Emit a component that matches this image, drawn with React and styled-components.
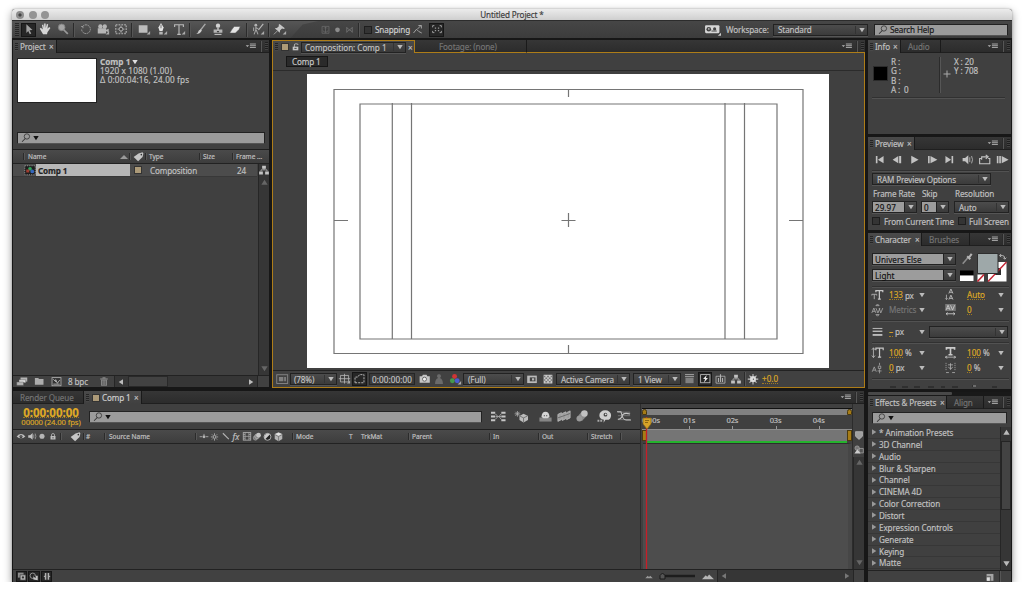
import styled, { createGlobalStyle, css } from 'styled-components';

const GlobalStyle = createGlobalStyle`
    * {
        box-sizing: border-box;
    }
    body {
        margin: 0;
        background: white;
        color: #c2c2c2;
        font-family: "Noto Sans", "Open Sans", sans-serif;
        font-size: 8.1px;
        line-height: 9px;
        letter-spacing: -0.12px;
        white-space: nowrap;
        overflow: hidden;
        -webkit-text-stroke: 0.15px;
    }
    svg {
        display: block;
        flex: none;
        overflow: visible;
    }
`;

/* ---------- window ---------- */

const Window = styled.div`
    display: flex;
    flex-direction: column;
    width: 1000px;
    height: 573px;
    margin: 9px 0 0 12px;
    background: #171717;
    border-radius: 3px 3px 0 0;
    box-shadow: 0 3px 8px rgba(0, 0, 0, 0.42), 0 0 2px rgba(0, 0, 0, 0.3);
`;

const TitleBar = styled.div`
    display: grid;
    grid-template-columns: 60px 1fr 64px;
    align-items: center;
    height: 11px;
    padding-left: 4px;
    background: linear-gradient(#ececec, #cfcfcf);
    border-radius: 3px 3px 0 0;
    color: #3c3c3c;
    text-align: center;
`;

const Lights = styled.div`
    display: flex;
    gap: 4.6px;
`;

const Light = styled.i`
    width: 8px;
    height: 8px;
    border-radius: 50%;
    background: ${p => p.$dirty ? 'radial-gradient(#444 22%, #8d8d8d 34%)' : '#949494'};
`;

const Toolbar = styled.div`
    display: flex;
    align-items: center;
    height: 18px;
    background: linear-gradient(#464646, #3c3c3c);
    border-top: 1px solid #2c2c2c;
`;

const ToolGroup = styled.div`
    display: flex;
    align-items: center;
    height: 17px;
    width: 306px;
    background: linear-gradient(#565656, #404040);
    clip-path: polygon(0 0, 100% 0, 95% 20%, 91% 100%, 0 100%);
`;

const Slot = styled.span`
    display: flex;
    flex: none;
    align-items: center;
    justify-content: center;
    width: ${p => p.$w}px;
    height: ${p => p.$h || 14}px;
    ${p => p.$pressed && css`
        background: #262626;
        border: 1px solid #161616;
    `}
    ${p => p.$dim && 'opacity: 0.65;'}
`;

const Divider = styled.i`
    flex: none;
    width: 2px;
    height: ${p => p.$h || 14}px;
    margin: 0 ${p => p.$m ?? 2}px;
    background: linear-gradient(90deg, #2b2b2b 50%, #565656 50%);
`;

const Grip = styled.i`
    flex: none;
    width: ${p => p.$w || 3}px;
    height: ${p => p.$h || 8}px;
    margin-left: ${p => p.$l ?? 2}px;
    background: repeating-linear-gradient(#171717 0 1px, #4b4b4b 1px 2px);
    opacity: 0.7;
`;

const Text = styled.span`
    flex: none;
    width: ${p => p.$w ? `${p.$w}px` : 'auto'};
    color: ${p => p.$c || 'inherit'};
    font-size: ${p => p.$s ? `${p.$s}px` : 'inherit'};
    margin-left: ${p => p.$l || 0}px;
    text-align: ${p => p.$align || 'left'};
`;

const Hot = styled(Text)`
    height: 10px;
    color: #dfa926;
    border-bottom: 1px dotted #a07a22;
    letter-spacing: 0;
`;

const Spacer = styled.i`
    flex: 1;
`;

const Check = styled.i`
    flex: none;
    width: 8px;
    height: 8px;
    background: #343434;
    border: 1px solid #1e1e1e;
`;

const Select = styled.div`
    display: flex;
    flex: none;
    align-items: center;
    width: ${p => p.$w}px;
    height: ${p => p.$h || 12}px;
    margin-left: ${p => p.$l || 0}px;
    padding-left: ${p => p.$p ?? 4}px;
    background: linear-gradient(#4c4c4c, #3b3b3b);
    border: 1px solid #222;
    box-shadow: 0 1px 0 #555;
`;

const ArrowCell = styled.i`
    display: flex;
    flex: none;
    align-items: center;
    justify-content: center;
    width: 12px;
    height: ${p => p.$plain ? '8px' : '100%'};
    margin-left: auto;
    border-left: 1px solid ${p => p.$plain ? '#333' : '#222'};
    background: ${p => p.$plain ? 'none' : 'linear-gradient(#4c4c4c, #3b3b3b)'};
`;

const Combo = styled(Select)`
    background: #9c9c9c;
    color: #111;
    padding-left: 2px;
    letter-spacing: 0.05px;
`;

const SearchField = styled.div`
    display: flex;
    flex: none;
    align-items: center;
    width: ${p => p.$w}px;
    height: 12px;
    margin-left: ${p => p.$l || 0}px;
    padding-left: 2px;
    background: #9b9b9b;
    border: 1px solid #222;
    border-bottom-color: #555;
    color: #161616;
`;

/* ---------- panels ---------- */

const Workspace = styled.div`
    display: flex;
    flex: 1;
    gap: 3px;
    min-height: 0;
    padding: 2px 1px 0;
`;

const MainArea = styled.div`
    display: flex;
    flex-direction: column;
    gap: 3px;
    width: 852px;
`;

const Upper = styled.div`
    display: flex;
    gap: 3px;
    height: 348px;
`;

const Panel = styled.section`
    display: flex;
    flex: none;
    flex-direction: column;
    width: ${p => p.$w ? `${p.$w}px` : 'auto'};
    height: ${p => p.$h}px;
    background: #404040;
    overflow: hidden;
`;

const RightColumn = styled.div`
    display: flex;
    flex-direction: column;
    gap: 3px;
    width: 143px;
`;

const TabBar = styled.div`
    display: flex;
    flex: none;
    height: 13px;
    background: linear-gradient(#363636, #2b2b2b);
`;

const Tab = styled.div`
    display: flex;
    align-items: center;
    width: ${p => p.$w}px;
    background: ${p => p.$idle ? 'transparent' : 'linear-gradient(#4a4a4a, #404040)'};
    color: ${p => p.$idle ? '#757575' : '#c2c2c2'};
    border-right: 1px solid #1a1a1a;
    border-bottom: ${p => p.$idle ? `1px solid ${p.$edge || '#1f1f1f'}` : 'none'};
    ${p => p.$focus && css`
        border: 1px solid #ae7d18;
        border-bottom: 0;
    `}
`;

const TabFill = styled.div`
    display: flex;
    flex: 1;
    align-items: center;
    justify-content: flex-end;
    border-bottom: 1px solid ${p => p.$focus ? '#ae7d18' : '#1f1f1f'};
`;

const Swatch = styled.i`
    flex: none;
    width: ${p => p.$size || 8}px;
    height: ${p => p.$size || 8}px;
    margin-left: ${p => p.$l || 0}px;
    background: ${p => p.$c || '#ac9a78'};
    border: 1px solid ${p => p.$edge || '#333'};
`;

const Row = styled.div`
    display: flex;
    flex: none;
    align-items: center;
    width: ${p => p.$w ? `${p.$w}px` : 'auto'};
    height: ${p => p.$h}px;
    margin-top: ${p => p.$t || 0}px;
    padding-left: ${p => p.$p || 0}px;
`;

const Rule = styled.hr`
    flex: none;
    width: ${p => p.$w || 133}px;
    height: 2px;
    margin: ${p => p.$t || 0}px 0 0 4px;
    border: 0;
    background: linear-gradient(#313131 50%, #525252 50%);
`;

const HeaderRow = styled(Row)`
    background: linear-gradient(#4a4a4a, #3d3d3d);
    border-top: 1px solid #1e1e1e;
    border-bottom: 1px solid #222;
    font-size: 6.5px;
    letter-spacing: 0;
`;

const Bar = styled(Row)`
    background: #414141;
    border-top: 1px solid #222;
`;

/* ---------- project ---------- */

const Preview = styled.div`
    display: flex;
    gap: 3px;
    height: 79px;
    padding: 5px 0 0 4px;
`;

const Thumb = styled.div`
    width: 80px;
    height: 45px;
    background: white;
    border: 1px solid #222;
`;

const Details = styled.div`
    display: flex;
    flex-direction: column;
    margin-top: -1px;
    font-size: 8.2px;
    letter-spacing: 0.15px;
`;

const DetailsName = styled.b`
    display: flex;
    align-items: center;
    gap: 2px;
    letter-spacing: 0;
`;

const ItemRow = styled(Row)`
    width: 244px;
    background: #4c4c4c;
    border-bottom: 1px solid #383838;
`;

const ItemName = styled.b`
    width: 94px;
    height: 12px;
    padding: 2px 0 0 2px;
    background: #b7b7b7;
    color: #222;
`;

const ListArea = styled.div`
    display: flex;
    flex: 1;
    justify-content: space-between;
    min-height: 0;
`;

const ScrollTrack = styled.div`
    display: flex;
    flex: ${p => p.$grow ? 1 : 'none'};
    flex-direction: column;
    align-items: center;
    justify-content: space-between;
    width: 11px;
    padding: ${p => p.$pad || '2px 0 3px'};
    background: #363636;
    border-left: 1px solid #262626;
`;

const HScroll = styled.div`
    display: flex;
    align-items: center;
    width: ${p => p.$w}px;
    height: 12px;
    padding: 0 3px;
    margin-left: ${p => p.$l || 0}px;
    background: #363636;
    border: solid #252525;
    border-width: 0 1px;
`;

const HThumb = styled.i`
    width: 40px;
    height: 11px;
    margin-left: 4px;
    background: #424242;
    border: 1px solid #292929;
`;

/* ---------- composition ---------- */

const CompBody = styled.div`
    display: flex;
    flex: 1;
    flex-direction: column;
    border: 1px solid #ae7d18;
    border-top: 0;
`;

const CompTitle = styled(Select)`
    background: linear-gradient(#484848, #393939);
    letter-spacing: -0.02px;
`;

const Crumb = styled.div`
    width: 42px;
    height: 11px;
    padding-left: 5px;
    background: #2a2a2a;
    border: 1px solid #161616;
    color: #c9c9c9;
`;

const Viewer = styled.div`
    flex: 1;
    padding: 3px 0 0 34px;
    background: #404040;
    border-top: 1px solid #2b2b2b;
`;

const TimeField = styled.div`
    width: 46px;
    height: 12px;
    margin: 0 3px 0 2px;
    padding: 1px 0 0 2px;
    border: 1px solid #262626;
    background: #3a3a3a;
    letter-spacing: 0.1px;
`;

/* ---------- timeline ---------- */

const TimelineBody = styled.div`
    display: flex;
    flex: 1;
    min-height: 0;
`;

const Outline = styled.div`
    display: flex;
    flex-direction: column;
    width: 628px;
    border-right: 1px solid #2c2c2c;
`;

const TimeBlock = styled.div`
    display: flex;
    flex-direction: column;
    align-items: center;
    width: 76px;
    color: #dfa926;
`;

const BigTime = styled.b`
    height: 11px;
    font-size: 11.6px;
    line-height: 11px;
    letter-spacing: -0.05px;
    border-bottom: 1px dotted #a07a22;
`;

const Tracks = styled.div`
    position: relative;
    display: flex;
    flex-direction: column;
    width: 211px;
`;

const Navigator = styled.div`
    display: flex;
    justify-content: space-between;
    height: 7px;
    margin: 4px 0 0 1px;
    background: #818181;
    border-top: 1px solid #111;
`;

const Handle = styled.i`
    width: 5px;
    background: #a67c16;
    border: 1px solid #4b3a10;
    border-radius: ${p => p.$round ? '3px 3px 0 0' : 0};
`;

const Ruler = styled.div`
    display: flex;
    height: 14px;
    padding: 1px 0 0;
    font-size: 7.5px;
`;

const Second = styled.span`
    flex: none;
    width: ${p => p.$first ? 42.3 : 43.2}px;
    padding-left: ${p => p.$first ? 1 : 0}px;
    background: linear-gradient(#999, #999) 6px 10px / ${p => p.$first ? 0 : 1}px 3px no-repeat;
`;

const WorkArea = styled.div`
    display: flex;
    justify-content: space-between;
    height: 12px;
    margin-left: 1px;
    background: #757575;
    border-top: 1px solid #8d8d8d;
`;

const Cached = styled.i`
    height: 2px;
    margin: 0 5px;
    background: #24b32d;
`;

const TrackArea = styled.div`
    flex: 1;
    margin-left: 2px;
    background: #4d4d4d;
    border-top: 1px solid #2d2d2d;
    border-right: 4px solid #464646;
`;

const Playhead = styled.i`
    position: absolute;
    left: 0;
    top: 13px;
    bottom: 0;
    width: 12px;
`;

const TrackSide = styled.div`
    display: flex;
    flex-direction: column;
    align-items: center;
    flex: 1;
    border-left: 1px solid #2c2c2c;
`;

/* ---------- right column ---------- */

const InfoBody = styled.div`
    display: flex;
    padding: 4px 0 0 5px;
    height: 43px;
`;

const InfoColumn = styled.div`
    display: flex;
    flex-direction: column;
    width: ${p => p.$w}px;
    line-height: 9.3px;
`;

const Playback = styled.div`
    display: flex;
    justify-content: space-between;
    align-items: center;
    height: 20px;
    padding: 0 2px 0 5px;
`;

const Effects = styled.ul`
    flex: 1;
    margin: 0;
    padding: 0;
    list-style: none;
`;

const Effect = styled.li`
    display: flex;
    align-items: center;
    gap: 2px;
    height: 11.87px;
    padding-left: 3px;
    border-bottom: 1px solid #373737;
    letter-spacing: -0.08px;
`;

const ScrollThumb = styled.i`
    height: 69px;
    width: 10px;
    margin-bottom: auto;
    margin-top: 5px;
    background: #434343;
    border: 1px solid #242424;
`;

const TopScroll = styled.div`
    flex: none;
    height: 4px;
    background: #191919;
    i {
        display: block;
        width: 84px;
        height: 3px;
        background: #484848;
        border-radius: 1px;
    }
`;

/* ---------- icons, 16x14 box centred on 8,7 ---------- */

const corner = <path d="M15 9v4h-4z" fill="#aaa" stroke="none" />;

const ICONS = {
    arrow: <path d="M5 1.500l7 6.500-3.400.4 2 3.600-1.700.8-1.800-3.800L5 11.500z" fill="#a2a2a2" />,
    hand: <path d="M2 6.500l1.200-1 2.300 2-1-5.300L6 1.700l.9 3.900.1-5.100h1.700l.1 5.100L10.100 1l1.500.5-.8 5.100 2-1.900 1.400.9-3.400 5-.5 2.200H5.800z" fill="#d5d5d5" />,
    zoom: <><circle cx="6.500" cy="5" r="3.800" fill="#a5a5a5" stroke="#808080" /><path d="M9 8l4.500 4.500" strokeWidth="2" stroke="#999" /></>,
    rotate: <path d="M4.500 3.500a5 5 0 1 1-1.500 4M4.500 4H2.500m2 0v2.500" fill="none" strokeDasharray="2 .7" stroke="#a5a5a5" />,
    camera: <><circle cx="5" cy="4" r="2.500" /><circle cx="10" cy="4" r="2.500" /><path d="M2 6h9.500v6H2zM11 8l3.500-1.500v4L11 9z" />{corner}</>,
    pan: <><rect x="2" y="2" width="12" height="10" fill="none" stroke="#999" strokeWidth="1.700" strokeDasharray="2 1.200" /><path d="M8 3v8M4 7h8" stroke="#aaa" /><circle cx="8" cy="7" r="2.200" fill="#444" stroke="#bbb" /></>,
    rect: <><path d="M2 2.500h10V11H2z" fill="#bdbdbd" />{corner}</>,
    pen: <><path d="M8 0l3 5-1.300 4h-3.400L5 5z" fill="#e4e4e4" /><path d="M8 2v4" stroke="#444" strokeWidth=".8" /><path d="M6 10h4v3H6z" />{corner}</>,
    type: <><path d="M3 4.500V2h10v2.500M8 2v11M6 13h4" fill="none" stroke="#bbb" strokeWidth="1.300" />{corner}</>,
    brush: <><path d="M13 1L7.500 8" stroke="#aaa" strokeWidth="1.500" /><path d="M7.500 7L9 8.500Q7 12.500 2.500 12.500q2-1 3-4z" fill="#ccc" /></>,
    stamp: <><circle cx="8" cy="3" r="2.500" fill="#d2d2d2" /><path d="M7 5h2v2.500h4V11H3V7.500h4z" fill="#b5b5b5" /><path d="M4 13h8" stroke="#ddd" /><path d="M6.500 9h3L8 11z" fill="#333" /></>,
    eraser: <path d="M7 4h7l-1.500 3.500L8.500 11.500H2L4 8z" fill="#e4e4e4" stroke="#555" strokeWidth=".6" />,
    roto: <><circle cx="5.500" cy="2.500" r="1.600" /><path d="M5.500 4v4l-2 5M6 8l2 5M5.500 5l3 2M3 5v4" stroke="#a5a5a5" strokeWidth="1.200" fill="none" /><path d="M14 1L8.500 8" stroke="#bbb" strokeWidth="1.300" />{corner}</>,
    pin: <><path d="M7.500 1l6 5-1 .9-2.200-.6-2.300 2.200-.2 2.500L2 6l2.500-.2 2.200-2.200-.2-1.700z" fill="#c6c6c6" /><path d="M5 9l-4 4" stroke="#aaa" />{corner}</>,
    axis: <path d="M3 2h10v10H3zM8 3v8M6 5l2-2 2 2M4 8q4 5 8 0" fill="none" stroke="#888" />,
    dot: <circle cx="8" cy="7" r="3.400" fill="#b5b5b5" />,
    view: <path d="M4 3v8M12 3v8M4 4l8 6M12 4l-8 6" fill="none" stroke="#888" strokeWidth="1.300" />,
    snap: <path d="M2 12l4-5 3 3 4 2M7 7l5-5M8.500 2h4v4" fill="none" stroke="#aaa" strokeWidth="1.200" />,
    region: <><path d="M3 5V3h2M11 3h2v2M13 9v2h-2M5 11H3V9" fill="none" stroke="#aaa" /><path d="M5.500 5H7v1.500H5.500zM9 5h1.500v1.500H9zM5.500 8H7v1.500H5.500zM9 8h1.500v1.500H9z" fill="#999" /></>,
    robot: <><rect x="1" y="3" width="13.500" height="7.500" rx="1" fill="#d5d5d5" /><circle cx="4.500" cy="6.800" r="2.200" fill="#444" /><circle cx="10" cy="6.500" r="1.500" fill="#444" /><circle cx="4.500" cy="6.500" r=".8" /><path d="M7 8.500h5" stroke="#555" /><path d="M16 10v3h-3z" fill="#ccc" /></>,
    search: <><circle cx="8.500" cy="5.500" r="3.300" fill="none" stroke="#333" /><path d="M6.500 8L2.500 12" stroke="#333" strokeWidth="1.300" /></>,
    menu: <><path d="M1 5.500h4.500L3.200 8z" /><path d="M6.500 4h8M6.500 6.300h8M6.500 8.600h8" stroke="#b5b5b5" strokeWidth="1.200" /></>,
    tag: <><path d="M8 3l5-1.500L14 3l-1 4.500L7.500 12.500 2 7.500z" fill="#c6c6c6" /><circle cx="11.500" cy="4.500" r="1" fill="#333" /></>,
    comp: <><rect x="1" y="1" width="14" height="12" fill="#1d1d1d" stroke="#aaa" strokeDasharray="1.500 1.500" /><circle cx="8" cy="5" r="2.500" fill="#32a35c" /><circle cx="11" cy="8.500" r="2.500" fill="#3567bd" /><path d="M3 6h4v4H3z" fill="#a03d31" /></>,
    tree: <><path d="M5.500 1h5v4h-5zM1.500 8.500h5v4h-5zM9.500 8.500h5v4h-5z" fill="#c2c2c2" /><path d="M8 4v2.500M4 8.500v-2h8v2" fill="none" stroke="#bbb" /></>,
    footage: <><path d="M6 2h9v5.500H6z" /><path d="M4 5h9v4H4z" fill="#ddd" stroke="#555" strokeWidth=".6" /><path d="M1 8h9v4.500H1z" stroke="#555" strokeWidth=".6" /></>,
    folder: <path d="M2.500 4V2.500H7L8 4h6v7.500H2.500z" fill="#adadad" />,
    newcomp: <><rect x="2.500" y="2" width="11" height="10" fill="#333" stroke="#b5b5b5" /><path d="M4 4l3 3V4.500l2 4.500 3-4M4 10h8" fill="none" stroke="#c5c5c5" /></>,
    trash: <><path d="M3 4h10M6 2.500h4" stroke="#9a9a9a" strokeWidth="1.300" /><path d="M4 5h8v8H4z" fill="#858585" /><path d="M6.500 6v6M9.500 6v6" stroke="#444" /></>,
    lock: <><path d="M3 6h10v7H3z" fill="#bdbdbd" /><path d="M5 6V4a3 3 0 0 1 6 0v2" fill="none" stroke="#bdbdbd" strokeWidth="1.500" /><path d="M8 8v3" stroke="#333" strokeWidth="1.500" /></>,
    unlock: <><path d="M3 6.500h10V13H3z" fill="#c5c5c5" /><path d="M6 7V3.500Q6 1.500 8 1.500h2.500q2 0 2 2" fill="none" stroke="#c5c5c5" strokeWidth="1.500" /><path d="M6 9.500h4" stroke="#333" strokeWidth="1.500" /></>,
    monitor: <><rect x="2" y="2" width="12.500" height="10" fill="none" stroke="#8a8a8a" /><path d="M4.500 4.500h5v5h-5zM10.500 4.500h2v5h-2z" fill="#808080" /></>,
    grid: <><path d="M3 3h10v8H3zM8 1v12M1 7h14" fill="none" stroke="#b5b5b5" />{corner}</>,
    mask: <path d="M2.500 12V5H6l2-3h5.500v10z" fill="none" stroke="#b5b5b5" strokeWidth="1.200" strokeDasharray="2.500 1.300" />,
    snapshot: <><path d="M2 4h3l1-2h4.500L11.500 4h3v8H2z" fill="#c6c6c6" /><circle cx="8" cy="7.600" r="2.500" fill="#eee" stroke="#555" /></>,
    person: <path d="M8 1.500a2.200 2.200 0 0 1 1 4.200q3.500 1 3.500 6.800h-9Q3.500 6.700 7 5.700a2.200 2.200 0 0 1 1-4.200z" fill="#6b6b6b" />,
    rgb: <><circle cx="7.500" cy="4" r="2.800" fill="#cf3535" /><circle cx="5" cy="8.800" r="2.800" fill="#459a4d" /><circle cx="10.500" cy="8.800" r="2.800" fill="#4a5cd0" />{corner}</>,
    roi: <><rect x="2.500" y="3" width="11" height="8.500" fill="#bbb" /><path d="M5.500 5h6.500v4.500H5.500z" fill="#444" /><path d="M8 6h2.500v2.500H8z" /></>,
    checker: <><rect x="3" y="2" width="10" height="10" fill="#c9c9c9" /><path d="M3 4h10M3 8h10" stroke="#777" strokeWidth="1.800" strokeDasharray="2 2" /><path d="M5 6h8M5 10h8" stroke="#777" strokeWidth="1.800" strokeDasharray="2 2" /></>,
    pixel: <><path d="M3 6h10v6.500H3z" fill="#808080" /><path d="M2.500 2h11M2.500 4.500h11" stroke="#bdbdbd" /></>,
    fast: <><rect x="2" y="2" width="11.500" height="10" fill="none" stroke="#c5c5c5" /><path d="M9.500 2.500L5 7.500h2.500L6 12l5-6H8.500z" fill="#eee" /></>,
    chart: <><path d="M2.500 4h11v8.500h-11z" fill="none" stroke="#b0b0b0" /><path d="M5.500 6v5M8 1.500V11M10.500 6v5" stroke="#b0b0b0" strokeWidth="1.400" /></>,
    aperture: <><circle cx="8" cy="7" r="3.500" fill="#ddd" /><path d="M8 1v3M8 10v3M2 7h3M11 7h3M4 3l2 2M10 9l2 2M12 3l-2 2M6 9l-2 2" stroke="#c5c5c5" strokeWidth="1.200" /><circle cx="8.500" cy="7" r=".7" fill="#444" /></>,
    eye: <><path d="M1 7q7-7.500 14 0-7 6-14 0z" fill="#bdbdbd" /><circle cx="8" cy="7" r="2.400" fill="#333" /><circle cx="8" cy="6.500" r=".9" /></>,
    speaker: <><path d="M2 5h3l4-3.500v11L5 9H2z" fill="#c2c2c2" /><path d="M10.800 4v6M13 2.500q2.400 4.500 0 9" fill="none" stroke="#aaa" strokeWidth="1.200" /></>,
    shy: <><circle cx="8" cy="7.500" r="2.300" /><path d="M1 7.500h4M11 7.500h4M8 3v2" stroke="#b5b5b5" strokeWidth="1.300" /></>,
    sun: <><circle cx="8" cy="7" r="2.500" fill="none" stroke="#c2c2c2" strokeWidth="1.400" /><path d="M8 .5v3M8 10.500v3M1.500 7h3M11.500 7h3M3.500 2.500l2 2M10.500 9.500l2 2M12.500 2.500l-2 2M5.500 9.500l-2 2" stroke="#c2c2c2" strokeWidth="1.300" /></>,
    slash: <path d="M3 2l9.500 9.500" stroke="#b5b5b5" strokeWidth="1.700" />,
    film: <><rect x="2" y="1" width="12" height="12" fill="none" stroke="#b5b5b5" strokeWidth="1.300" /><path d="M5 1v12M11 1v12M5 7h6M2 4h3M2 7h3M2 10h3M11 4h3M11 7h3M11 10h3" stroke="#b5b5b5" /></>,
    blur: <><circle cx="5.500" cy="9.500" r="3.500" fill="#777" stroke="#aaa" /><circle cx="8" cy="7" r="3.700" fill="#888" stroke="#bbb" /><circle cx="10.500" cy="5" r="3.700" fill="#c5c5c5" /></>,
    adjust: <><circle cx="8" cy="7" r="5" fill="#222" stroke="#bbb" strokeWidth="1.300" /><path d="M4.500 10.500A5 5 0 0 1 11.500 3.500z" fill="#ccc" /></>,
    cube: <><path d="M8 .5l5.500 2.500v7L8 13.500 2.500 10V3z" fill="#b5b5b5" /><path d="M3 4l5 2.500L13 4M8 6.500V13" stroke="#666" fill="none" /><path d="M8 1l4.500 2L8 5.500 3.500 3z" fill="#e2e2e2" /></>,
    flow: <><path d="M0 3h4.500M0 7h4.500M0 11h4.500M11 3h4.500M11 7h4.500M11 11h4.500" stroke="#c5c5c5" strokeWidth="2.200" /><path d="M4.500 4l3 3-3 3M11 4L8.500 7l2.500 3M5 7h6" fill="none" stroke="#a5a5a5" /></>,
    draft: <><path d="M3 0v7M-.5 3.500h7M.5 1l5 5M5.500 1l-5 5" stroke="#b5b5b5" strokeWidth=".9" /><path d="M10.500 3.500L16 6v5l-5.500 3L5.500 11V6z" fill="#bbb" /><path d="M6 6.200l4.500 2.300L15.500 6M10.500 8.500v5" fill="none" stroke="#666" /></>,
    hide: <><path d="M.5 8h15v5H.5z" fill="#858585" /><path d="M3 7.500Q3.500 1 8 1t5 6.500L10.500 9h-5z" fill="#d5d5d5" /><path d="M6.500 5v1.500M9.500 5v1.500" stroke="#333" /></>,
    frames: <><path d="M1 5l4-2v8l-4 2zM6 4l4-2v8l-4 2zM11 3l4-2v8l-4 2z" fill="#9d9d9d" stroke="#c5c5c5" strokeWidth=".8" /><path d="M1 9l14-5" stroke="#666" /></>,
    motion: <><path d="M2.500 8L8 1.500l5.500 5L8 12.500z" fill="#8b8b8b" /><circle cx="5" cy="9.800" r="3.300" fill="#999" /><circle cx="10.800" cy="4" r="3.700" fill="#c2c2c2" /></>,
    brain: <><path d="M2.500 5.500a6 5 0 0 1 12.500 0q0 5-4.500 5H9l-2 3 .3-3Q2.500 9.500 2.500 5.500z" fill="#cfcfcf" /><circle cx="9" cy="5" r="2" fill="#444" /><circle cx="9.300" cy="4.600" r="1" fill="#ddd" /><path d="M.5 11.500h6" stroke="#aaa" strokeWidth="2" strokeDasharray="2 1" /></>,
    graph: <><path d="M1 2.500h14M1 6.500h14M1 11h14" stroke="#8a8a8a" strokeWidth=".8" /><path d="M0 2h4.500q2 9.500 6 9.500H16M1 10.500q4 0 5-4t9-2" fill="none" stroke="#c5c5c5" strokeWidth="1.200" /></>,
    first: <path d="M3.500 2.500h2v9h-2zM13 2.500v9L6 7z" fill="#c2c2c2" />,
    back: <path d="M9 2.500v9L2 7zM10 2.500h2.500v9H10z" fill="#c2c2c2" />,
    play: <path d="M4 2l9 5-9 5z" fill="#c2c2c2" />,
    step: <path d="M2.500 2.500h2v9h-2zM5.500 2.500L14 7l-8.500 4.500z" fill="#c2c2c2" />,
    last: <path d="M3 2.500L10 7l-7 4.500zM10.500 2.500h2v9h-2z" fill="#c2c2c2" />,
    loop: <path d="M4 5.500H2v6.500h12.500V5.500h-2M4.500 7V3.500H11M9.500 1l3 2.500-3 2.500" fill="none" stroke="#c2c2c2" strokeWidth="1.400" />,
    ram: <path d="M1 2.500h2v9H1zM4 2.500h2v9H4zM7 2.500L15.500 7 7 11.500z" fill="#c2c2c2" />,
    dropper: <><path d="M9 5L3 12" stroke="#8d8d8d" strokeWidth="1.700" /><path d="M8 3.500l3.500 3.500M10 5l3-4" stroke="#b5b5b5" strokeWidth="2.300" /></>,
    size: <><path d="M6 4V2h8.500v2M10.300 2v10.500M8.500 12.500h3.600" fill="none" stroke="#c5c5c5" strokeWidth="1.500" /><path d="M1 8V6.500h6V8M4 6.500V12.500" stroke="#aaa" fill="none" strokeWidth="1.200" /></>,
    leading: <><path d="M6 5.500L8.500 0 11 5.500M7 4h3M6 13l2.500-5.500L11 13M7 11.500h3" fill="none" stroke="#b5b5b5" strokeWidth="1.200" /><path d="M3 7v6M1.500 11.500L3 13l1.500-1.500" fill="none" stroke="#b5b5b5" /></>,
    kerning: <path d="M1 11l2.500-6L6 11M2 9h3M6 5l2.500 6L11 5M10 5l2 6 2.500-6M6 2h4L8 0zM6 13h4l-2 2z" fill="none" stroke="#b5b5b5" strokeWidth=".9" />,
    tracking: <><path d="M1.500 0h13v8.500h-13z" fill="#7a7a7a" /><path d="M2.500 7.500l2.500-6 2.500 6M4 5.500h2M8 1.500l2.500 6 2.500-6M2.500 12h11M4.500 10.500L2.500 12l2 1.500M11.500 10.500l2 1.500-2 1.500" fill="none" stroke="#d2d2d2" /></>,
    stroke: <><path d="M2 3h12" stroke="#bbb" strokeWidth="1.200" /><path d="M2 6.500h12" stroke="#bbb" strokeWidth="1.700" /><path d="M2 11h12" stroke="#bbb" strokeWidth="2.300" /></>,
    vscale: <><path d="M6 4V1.500h9V4M10.500 1.500v11M8.500 12.500h4" fill="none" stroke="#c5c5c5" strokeWidth="1.500" /><path d="M3 1v12M1 3.500L3 1l2 2.500M1 10.500L3 13l2-2.500" fill="none" stroke="#bbb" /></>,
    hscale: <><path d="M3 3.500V1h10v2.500M8 1v8.500M5.500 9.500h5" fill="none" stroke="#c9c9c9" strokeWidth="2" /><path d="M1.500 12.500h13M4 11l-2.500 1.500L4 14M12 11l2.500 1.500L12 14" fill="none" stroke="#bbb" /></>,
    baseline: <path d="M1.500 12L4 6l2.500 6M2.500 10h3M9 5h3v3H9zM8 11h5M10.500 1v3M10.500 9v5" fill="none" stroke="#a5a5a5" />,
    tsume: <><path d="M2.500 1v10M13.500 1v10" stroke="#a5a5a5" strokeDasharray="1.500 1" /><path d="M5 3.500h6M8 1.500v8M5.500 6q3 5 5 0M2.500 13H6M10 13h3.500" fill="none" stroke="#b0b0b0" /></>,
    shield: <path d="M2.500 1h11v7.500L8 13.500 2.500 8.500z" fill="#a0a0a0" stroke="#ccc" />,
    renderer: <><path d="M9 5h6v6.500H9z" fill="#555" stroke="#aaa" /><circle cx="6" cy="4.500" r="3.200" fill="#777" stroke="#aaa" /><path d="M2 12.500L6.500 6l4.500 6.500z" fill="#ccc" /></>,
    mountainSmall: <path d="M2 10l4-4 2 2 2-2 4 4z" fill="#9a9a9a" />,
    mountainBig: <path d="M0 11l5-5.500 2 2 2.500-3L16 11z" fill="#b5b5b5" />,
    swap: <path d="M3 5h5q4 0 4 6M5 2L2 5l3 3M9 9l3 3 3-3" fill="none" stroke="#bbb" strokeWidth="1.800" />,
    newitem: <><path d="M2.500 1.500h11v11h-11z" fill="#a5a5a5" /><path d="M2.500 5.500H9v7" fill="none" stroke="#444" /><path d="M3 7.500h4.500v5H3z" fill="#e0e0e0" /></>,
    switches: <><path d="M1.500 1h9v8h-9z" fill="#8d8d8d" /><path d="M5 4.500h9v8.500H5z" fill="#b0b0b0" stroke="#333" /><circle cx="9.500" cy="8.700" r="1.800" fill="#333" /></>,
    modes: <><circle cx="6" cy="6" r="4.300" fill="none" stroke="#a5a5a5" strokeWidth="1.300" /><path d="M7 6h7v7l-7-1z" fill="#c2c2c2" /><path d="M6 6h4.500v4z" fill="#222" /></>,
    braces: <path d="M7 1.500H4.500v4L2.500 7l2 1.500v4H7zM9 1.500h2.500v4l2 1.500-2 1.500v4H9z" fill="#b0b0b0" />,
};

const Icon = ({ name, size = 14 }) => (
    <svg width={size} height={size * 0.875} viewBox="0 0 16 14" fill="#b5b5b5">
        {ICONS[name]}
    </svg>
);

const Triangle = ({ dir = 'down', color = '#bbb', size = 6 }) => {
    const turn = { down: 0, left: 90, up: 180, right: 270 }[dir];
    return (
        <svg width={size} height={size} viewBox="0 0 6 6">
            <path d="M.3 1h5.400L3 5.300z" fill={color} transform={`rotate(${turn} 3 3)`} />
        </svg>
    );
};

const Tool = ({ icon, w, size, ...rest }) => (
    <Slot $w={w} {...rest}><Icon name={icon} size={size} /></Slot>
);

const DropArrow = ({ plain }) => <ArrowCell $plain={plain}><Triangle /></ArrowCell>;

const PanelMenu = ({ focus }) => (
    <TabFill $focus={focus}>
        <Icon name="menu" size={12} />
        <Divider $h={11} $m={3} />
        <Grip $l={0} />
        <Slot $w={1} />
    </TabFill>
);

const SearchBox = ({ w, l }) => (
    <SearchField $w={w} $l={l}>
        <Icon name="search" size={13} />
        <Triangle color="#111" />
    </SearchField>
);

const MainToolbar = () => (
    <Toolbar>
        <ToolGroup>
            <Grip $w={4} $h={13} $l={3} />
            <Slot $w={2} />
            <Tool icon="arrow" w={15} $pressed />
            <Tool icon="hand" w={18} />
            <Tool icon="zoom" w={17} />
            <Divider />
            <Tool icon="rotate" w={17} />
            <Tool icon="camera" w={18} />
            <Tool icon="pan" w={17} />
            <Divider />
            <Tool icon="rect" w={17} />
            <Tool icon="pen" w={18} />
            <Tool icon="type" w={17} />
            <Divider />
            <Tool icon="brush" w={16} />
            <Tool icon="stamp" w={17} />
            <Tool icon="eraser" w={18} />
            <Divider />
            <Tool icon="roto" w={16} />
            <Divider />
            <Tool icon="pin" w={16} />
        </ToolGroup>
        <Tool icon="axis" w={14} size={11} $dim />
        <Tool icon="dot" w={11} size={11} $dim />
        <Tool icon="view" w={12} size={11} $dim />
        <Divider $m={3} />
        <Slot $w={1} />
        <Check />
        <Text $l={3} $w={34} $c="#d0d0d0">Snapping</Text>
        <Tool icon="snap" w={17} size={12} />
        <Slot $w={3} />
        <Tool icon="region" w={15} size={14} $pressed />
        <Spacer />
        <Icon name="robot" size={17} />
        <Text $l={5} $w={47}>Workspace:</Text>
        <Select $w={95}>Standard<DropArrow plain /></Select>
        <SearchField $w={134} $l={6}>
            <Icon name="search" size={13} />
            <Text>Search Help</Text>
        </SearchField>
        <Slot $w={4} />
    </Toolbar>
);

const ProjectPanel = () => (
    <Panel $w={256} $h={347}>
        <TabBar>
            <Tab $w={44}><Grip /><Text $l={2} $w={29}>Project</Text>×</Tab>
            <PanelMenu />
        </TabBar>
        <Preview>
            <Thumb />
            <Details>
                <DetailsName>Comp 1<Triangle color="#e0e0e0" /></DetailsName>
                <span>1920 x 1080 (1.00)</span>
                <span>Δ 0:00:04:16, 24.00 fps</span>
            </Details>
        </Preview>
        <SearchBox w={248} l={4} />
        <HeaderRow $h={15} $t={5} $p={9}>
            <Divider $h={7} $m={1} />
            <Text $w={92} $l={2}>Name</Text>
            <svg width="8" height="4" viewBox="0 0 8 4"><path d="M0 4l4-4 4 4z" fill="#999" /></svg>
            <Divider $h={7} $m={1} />
            <Tool icon="tag" w={13} size={13} />
            <Divider $h={7} $m={0} />
            <Text $l={2} $w={50}>Type</Text>
            <Divider $h={7} $m={0} />
            <Text $l={2} $w={29}>Size</Text>
            <Divider $h={7} $m={0} />
            <Text $l={2}>Frame ...</Text>
        </HeaderRow>
        <ListArea>
            <ItemRow $h={13} $p={11}>
                <Icon name="comp" size={12} />
                <ItemName>Comp 1</ItemName>
                <Swatch $l={4} />
                <Text $l={8} $w={87}>Composition</Text>
                <Text>24</Text>
            </ItemRow>
            <ScrollTrack $pad="0 0 3px">
                <Tool icon="tree" w={11} size={12} $h={13} />
                <Slot $w={2} $h={2} />
                <Triangle dir="up" color="#666" size={7} />
                <Spacer />
                <Triangle color="#666" size={7} />
            </ScrollTrack>
        </ListArea>
        <Bar $h={12} $p={1}>
            <Tool icon="footage" w={15} size={12} />
            <Tool icon="folder" w={19} size={12} />
            <Tool icon="newcomp" w={17} size={13} />
            <Text $l={3} $w={29}>8 bpc</Text>
            <Tool icon="trash" w={14} size={12} />
            <HScroll $w={144} $l={3}>
                <Triangle dir="left" />
                <HThumb />
                <Spacer />
                <Triangle dir="right" />
            </HScroll>
        </Bar>
    </Panel>
);

const SafeZones = () => (
    <svg width="522" height="294" viewBox="307 74 522 294">
        <path d="M307 74h522v294H307z" fill="#fff" />
        <g fill="none" stroke="#757575" strokeWidth="1.200">
            <path d="M334 89.500h469v264H334zM360 104h417v235H360z" />
            <path d="M392.300 103v236M411.500 103v236M725 103v236M744.500 103v236" />
            <path d="M568.500 89v8M568.500 345v8M334 220.500h14M789 220.500h14M561.500 220.500h14M568.500 213v14" />
        </g>
    </svg>
);

const CompositionPanel = () => (
    <Panel $w={593} $h={348}>
        <TabBar>
            <Tab $w={143} $focus>
                <Grip />
                <Swatch $l={3} />
                <Tool icon="unlock" w={12} size={9} />
                <CompTitle $w={105} $h={11} $p={3}>Composition: Comp 1<DropArrow plain /></CompTitle>
                <Text $l={2}>×</Text>
            </Tab>
            <Tab $w={112} $idle $edge="#ae7d18"><Text $l={24}>Footage: (none)</Text></Tab>
            <PanelMenu focus />
        </TabBar>
        <CompBody>
            <Row $h={17} $p={13}><Crumb>Comp 1</Crumb></Row>
            <Viewer><SafeZones /></Viewer>
            <Bar $h={17} $p={1}>
                <Tool icon="monitor" w={15} size={14} />
                <Select $w={47} $p={3} $l={1}>(78%)<DropArrow plain /></Select>
                <Tool icon="grid" w={15} size={13} />
                <Tool icon="mask" w={15} size={13} $pressed />
                <TimeField>0:00:00:00</TimeField>
                <Tool icon="snapshot" w={13} size={13} />
                <Tool icon="person" w={16} />
                <Tool icon="rgb" w={16} />
                <Select $w={61}>(Full)<DropArrow plain /></Select>
                <Tool icon="roi" w={16} size={14} />
                <Tool icon="checker" w={15} size={14} />
                <Select $w={74} $p={4} $l={1}>Active Camera<DropArrow plain /></Select>
                <Select $w={48} $l={3}>1 View<DropArrow plain /></Select>
                <Tool icon="pixel" w={17} size={13} />
                <Tool icon="fast" w={14} size={13} $pressed />
                <Tool icon="chart" w={16} size={13} />
                <Tool icon="tree" w={15} size={12} />
                <Divider $m={1} />
                <Tool icon="aperture" w={12} size={14} />
                <Hot $l={3}>+0.0</Hot>
            </Bar>
        </CompBody>
    </Panel>
);

const COLUMNS = [['Mode', 53], ['T', 12], ['TrkMat', 47], ['Parent', 77], ['In', 45], ['Out', 45], ['Stretch', 29]];

const TimelinePanel = () => (
    <Panel $w={851} $h={191}>
        <TabBar>
            <Tab $w={71} $idle><Text $l={7}>Render Queue</Text></Tab>
            <Tab $w={58}><Grip /><Swatch $l={3} /><Text $l={2} $w={32} $c="#d0d0d0">Comp 1</Text>×</Tab>
            <PanelMenu />
        </TabBar>
        <TimelineBody>
            <Outline>
                <Row $h={25}>
                    <TimeBlock>
                        <BigTime>0:00:00:00</BigTime>
                        <Text $s={7.7}>00000 (24.00 fps)</Text>
                    </TimeBlock>
                    <SearchBox w={393} />
                    <Slot $w={6} />
                    <Tool icon="flow" w={20} size={15} />
                    <Slot $w={4} />
                    <Tool icon="draft" w={18} size={13} />
                    <Slot $w={6} />
                    <Tool icon="hide" w={19} size={13} />
                    <Tool icon="frames" w={18} size={14} />
                    <Tool icon="motion" w={18} size={14} />
                    <Slot $w={5} />
                    <Tool icon="brain" w={17} size={15} />
                    <Slot $w={2} />
                    <Tool icon="graph" w={17} size={14} />
                </Row>
                <HeaderRow $h={15} $p={3}>
                    <Tool icon="eye" w={10} size={10} />
                    <Tool icon="speaker" w={11} size={10} />
                    <Tool icon="dot" w={10} size={12} />
                    <Tool icon="lock" w={11} size={8} />
                    <Divider $h={7} $m={2} />
                    <Slot $w={4} />
                    <Tool icon="tag" w={14} size={13} />
                    <Divider $h={7} $m={1} />
                    <Text $w={18}>#</Text>
                    <Divider $h={7} $m={0} />
                    <Text $l={3} $w={86}>Source Name</Text>
                    <Divider $h={7} $m={0} />
                    <Slot $w={1} />
                    <Tool icon="shy" w={11} size={10} />
                    <Tool icon="sun" w={11} size={9} />
                    <Tool icon="slash" w={11} size={10} />
                    <Text $w={10} $s={8.500} $align="center"><i>fx</i></Text>
                    <Tool icon="film" w={11} size={10} />
                    <Tool icon="blur" w={10} size={10} />
                    <Tool icon="adjust" w={11} size={11} />
                    <Tool icon="cube" w={10} size={11} />
                    <Slot $w={9} />
                    {COLUMNS.map(([label, w]) => (
                        <Row key={label} $h={9}>
                            {!label.startsWith('T') && <Divider $h={7} $m={0} />}
                            <Text $l={label.startsWith('T') ? 0 : 2} $w={w}>{label}</Text>
                        </Row>
                    ))}
                    <Divider $h={7} $m={0} />
                </HeaderRow>
            </Outline>
            <Tracks>
                <Navigator><Handle $round /><Handle $round /></Navigator>
                <Ruler>
                    {['0:00s', '01s', '02s', '03s', '04s'].map((t, i) => <Second key={t} $first={i === 0}>{t}</Second>)}
                </Ruler>
                <WorkArea><Handle /><Handle /></WorkArea>
                <Cached />
                <TrackArea />
                <Playhead>
                    <svg width="12" height="152" viewBox="0 0 12 152">
                        <path d="M5.500 0v152" stroke="#c81e28" strokeWidth="1.300" />
                        <path d="M2 1h8v6L6 12 2 7z" fill="#d6a329" stroke="#8b6714" strokeWidth=".7" />
                        <path d="M4 3.500h4M4 5.500h3" stroke="#8b6714" />
                    </svg>
                </Playhead>
            </Tracks>
            <TrackSide>
                <Slot $w={10} $h={23} />
                <Tool icon="shield" w={11} size={10} $h={16} />
                <Tool icon="renderer" w={11} size={11} $h={14} />
                <ScrollTrack $grow>
                    <Triangle dir="up" color="#666" size={7} />
                    <Triangle color="#666" size={7} />
                </ScrollTrack>
            </TrackSide>
        </TimelineBody>
        <Bar $h={13} $p={3}>
            <Tool icon="switches" w={11} size={10} $h={11} $pressed />
            <Slot $w={1} />
            <Tool icon="modes" w={12} size={10} $h={11} $pressed />
            <Slot $w={1} />
            <Tool icon="braces" w={11} size={10} $h={11} $pressed />
            <Slot $w={592} />
            <Icon name="mountainSmall" size={10} />
            <Slot $w={6} />
            <svg width="36" height="8" viewBox="0 0 36 8">
                <path d="M3 4h32" stroke="#1d1d1d" strokeWidth="2.500" />
                <path d="M0 7V3.500L2.500 1 5 3.500V7z" fill="#555" stroke="#1b1b1b" />
            </svg>
            <Slot $w={6} />
            <Icon name="mountainBig" size={12} />
            <HScroll $w={137} $l={3}>
                <Triangle dir="left" color="#777" />
                <Spacer />
                <Triangle dir="right" color="#777" />
            </HScroll>
        </Bar>
    </Panel>
);

const InfoPanel = () => (
    <Panel $h={94}>
        <TabBar>
            <Tab $w={33}><Grip /><Text $l={2} $w={18}>Info</Text>×</Tab>
            <Tab $w={40} $idle><Text $l={7}>Audio</Text></Tab>
            <PanelMenu />
        </TabBar>
        <InfoBody>
            <Row $h={32}><Swatch $size={15} $c="#000" $edge="#2b2b2b" /></Row>
            <Slot $w={3} />
            <InfoColumn $w={48}>
                <span>R :</span><span>G :</span><span>B :</span><span>A :&nbsp; 0</span>
            </InfoColumn>
            <Divider $h={36} $m={0} />
            <Row $h={34} $p={2}>
                <svg width="8" height="8" viewBox="0 0 8 8"><path d="M4 .5v7M.5 4h7" stroke="#aaa" /></svg>
            </Row>
            <Slot $w={3} />
            <InfoColumn><span>X : 20</span><span>Y : 708</span></InfoColumn>
        </InfoBody>
        <Rule $t={1} />
    </Panel>
);

const PreviewPanel = () => (
    <Panel $h={93}>
        <TabBar>
            <Tab $w={47}><Grip /><Text $l={2} $w={32}>Preview</Text>×</Tab>
            <PanelMenu />
        </TabBar>
        <Playback>
            {['first', 'back', 'play', 'step', 'last', 'speaker', 'loop', 'ram'].map(name => <Icon key={name} name={name} size={13} />)}
        </Playback>
        <Rule $w={137} />
        <Row $h={14} $p={4}><Select $w={119}>RAM Preview Options<DropArrow plain /></Select></Row>
        <Row $h={15} $p={5}>
            <Text $w={49}>Frame Rate</Text><Text $w={33}>Skip</Text><Text>Resolution</Text>
        </Row>
        <Row $h={12} $p={4}>
            <Combo $w={45}>29.97<DropArrow /></Combo>
            <Combo $w={28} $l={4}>0<DropArrow /></Combo>
            <Select $w={55} $l={5}>Auto<DropArrow plain /></Select>
        </Row>
        <Row $h={14} $t={1} $p={4}>
            <Check /><Text $l={4} $w={74}>From Current Time</Text><Check /><Text $l={3}>Full Screen</Text>
        </Row>
    </Panel>
);

const CharField = ({ icon, value, unit, w, iconW = 17, gap = 3, dim }) => (
    <Row $h={14}>
        <Tool icon={icon} w={iconW} size={13} />
        <Row $h={12} $w={w - iconW} $p={gap}>
            {dim ? <Text $c="#777">{value}</Text> : <Hot>{value}</Hot>}
            {unit && <Text $l={2}>{unit}</Text>}
        </Row>
        <Triangle />
    </Row>
);

const CharPair = ({ left, right, h = 15, t }) => (
    <Row $h={h} $t={t} $p={1}>
        <CharField w={50} {...left} />
        <Slot $w={16} />
        <CharField w={57} iconW={19} gap={7} {...right} />
    </Row>
);

const CharacterPanel = () => (
    <Panel $h={156}>
        <TabBar>
            <Tab $w={54}><Grip /><Text $l={2} $w={40}>Character</Text>×</Tab>
            <Tab $w={48} $idle><Text $l={7}>Brushes</Text></Tab>
            <PanelMenu />
        </TabBar>
        <Row $h={32} $t={7} $p={4}>
            <div>
                <Combo $w={84} $h={12}>Univers Else<DropArrow /></Combo>
                <Row $h={20}><Combo $w={84} $h={12}>Light<DropArrow /></Combo></Row>
            </div>
            <svg width="51" height="32" viewBox="0 0 51 32">
                <g transform="translate(4 0) scale(.9)">{ICONS.dropper}</g>
                <path d="M4 17.500h13.500v5H4z" fill="#000" />
                <path d="M4 22.500h13.500V28H4z" fill="#fff" />
                <path d="M32 9h18.500v19.500H32z" fill="#fff" />
                <path d="M38 15h7v7h-7z" fill="#2c2c2c" />
                <path d="M32 28.500L50.500 9" stroke="#c32332" strokeWidth="1.400" />
                <path d="M21.500 21.500h6.500v7h-6.500z" fill="#fff" />
                <path d="M21.500 28.500l6.500-7" stroke="#c32332" strokeWidth="1.600" />
                <path d="M21.500.5H42v20H21.500z" fill="#9ea8a9" stroke="#2e2e2e" />
                <g transform="translate(42.500 0) scale(.52)">{ICONS.swap}</g>
            </svg>
        </Row>
        <Rule $w={137} $t={1} />
        <CharPair
            h={14}
            left={{ icon: 'size', value: '133', unit: 'px' }}
            right={{ icon: 'leading', value: 'Auto' }}
        />
        <CharPair
            left={{ icon: 'kerning', value: 'Metrics', dim: true }}
            right={{ icon: 'tracking', value: '0' }}
        />
        <Rule $w={137} $t={3} />
        <Row $h={19} $p={1}>
            <CharField icon="stroke" value="–" unit="px" w={50} />
            <Select $w={79} $l={4}><DropArrow plain /></Select>
        </Row>
        <Rule $w={137} $t={1} />
        <CharPair
            t={1}
            left={{ icon: 'vscale', value: '100', unit: '%' }}
            right={{ icon: 'hscale', value: '100', unit: '%' }}
        />
        <CharPair
            left={{ icon: 'baseline', value: '0', unit: 'px' }}
            right={{ icon: 'tsume', value: '0', unit: '%' }}
        />
        <Rule $w={137} $t={3} />
        <svg width="143" height="10" viewBox="0 0 143 10">
            <path d="M22 7h6M34 7h6M46 7h6M60 7h6M73 7h4M84 7h6M104 6h4M124 7h5" stroke="#1e1e1e" />
            <path d="M105 6h3" stroke="#aaa" />
        </svg>
    </Panel>
);

const EFFECTS = [
    '* Animation Presets', '3D Channel', 'Audio', 'Blur & Sharpen', 'Channel', 'CINEMA 4D',
    'Color Correction', 'Distort', 'Expression Controls', 'Generate', 'Keying', 'Matte',
];

const EffectsPanel = () => (
    <Panel $h={191}>
        <TopScroll><i /></TopScroll>
        <TabBar>
            <Tab $w={79}><Grip /><Text $l={2} $w={65}>Effects &amp; Presets</Text>×</Tab>
            <Tab $w={37} $idle><Text $l={7}>Align</Text></Tab>
            <PanelMenu />
        </TabBar>
        <Row $h={18} $p={4}><SearchBox w={135} /></Row>
        <ListArea>
            <Effects>
                {EFFECTS.map(name => (
                    <Effect key={name}><Triangle dir="right" color="#999" />{name}</Effect>
                ))}
            </Effects>
            <ScrollTrack>
                <Triangle dir="up" size={7} />
                <ScrollThumb />
                <Triangle size={7} />
            </ScrollTrack>
        </ListArea>
        <Bar $h={13}>
            <Slot $w={117} />
            <Icon name="newitem" size={10} />
            <Divider $h={12} $m={4} />
        </Bar>
    </Panel>
);

const App = () => {

    return (
        <>
            <GlobalStyle />
            <Window>
                <TitleBar>
                    <Lights><Light $dirty /><Light /><Light /></Lights>
                    <span>Untitled Project *</span>
                </TitleBar>
                <MainToolbar />
                <Workspace>
                    <MainArea>
                        <Upper>
                            <ProjectPanel />
                            <CompositionPanel />
                        </Upper>
                        <TimelinePanel />
                    </MainArea>
                    <RightColumn>
                        <InfoPanel />
                        <PreviewPanel />
                        <CharacterPanel />
                        <EffectsPanel />
                    </RightColumn>
                </Workspace>
            </Window>
        </>
    );

};

export default App;
